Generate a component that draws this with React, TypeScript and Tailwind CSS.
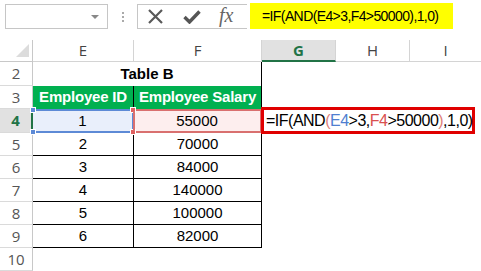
import React from 'react';

const cellFont = { fontFamily: '"Liberation Sans", Arial, sans-serif' };
const uiFont = { fontFamily: '"Open Sans", "Noto Sans", sans-serif' };

const salaries = [
  { id: 2, salary: '70000' },
  { id: 3, salary: '84000' },
  { id: 4, salary: '140000' },
  { id: 5, salary: '100000' },
  { id: 6, salary: '82000' },
];

// Formula rendered with Excel's reference colouring
const Formula: React.FC = () => (
  <>
    =IF(AND<span className="text-[#e0807a]">(</span>
    <span className="text-[#4f7fd0]">E4</span>&gt;3,
    <span className="text-[#d95050]">F4</span>&gt;50000
    <span className="text-[#e0807a]">)</span>,1,0)
  </>
);

const RowHead: React.FC<{ n: number; h: string; active?: boolean }> = ({ n, h, active }) => (
  <div
    style={uiFont}
    className={`${h} w-[33px] shrink-0 flex items-center justify-center text-[15px] border-b border-[#dadada] ${
      active
        ? 'bg-[#e1e1e1] text-[#217346] font-bold border-r-2 border-r-[#217346]'
        : 'text-[#555] border-r border-r-[#c8c8c8]'
    }`}
  >
    {n}
  </div>
);

const Handle: React.FC<{ className: string }> = ({ className }) => (
  <div className={`absolute w-[6px] h-[6px] border border-white ${className}`} />
);

const TopBar: React.FC = () => (
  <div className="h-[40px] relative flex items-start pt-[4px]">
    {/* name box */}
    <div className="ml-[5px] w-[103px] h-[25px] border border-[#c6c6c6] relative">
      <div className="absolute right-[8px] top-[10px] w-0 h-0 border-l-[4px] border-r-[4px] border-t-[4px] border-l-transparent border-r-transparent border-t-[#888]" />
    </div>
    {/* grip dots */}
    <div className="w-[29px] h-[25px] flex flex-col items-center justify-center gap-[2px]">
      <div className="w-[2px] h-[2px] bg-[#aaa]" />
      <div className="w-[2px] h-[2px] bg-[#aaa]" />
      <div className="w-[2px] h-[2px] bg-[#aaa]" />
    </div>
    {/* cancel / enter / insert function */}
    <div className="w-[110px] h-[25px] border border-r-0 border-[#c6c6c6] flex items-center pl-[9px]">
      <svg width="17" height="15" viewBox="0 0 17 15">
        <path d="M2 1 L15 14 M15 1 L2 14" stroke="#595959" strokeWidth="2.2" />
      </svg>
      <svg className="ml-[19px]" width="18" height="14" viewBox="0 0 18 14">
        <path d="M1.5 7 L6.5 12 L16.5 1.5" stroke="#555" strokeWidth="3.4" fill="none" />
      </svg>
      <span
        className="ml-[18px] text-[#666] italic text-[20px] leading-none -mt-[3px]"
        style={{ fontFamily: '"Liberation Serif", "Times New Roman", serif' }}
      >
        fx
      </span>
    </div>
    {/* formula input */}
    <div className="ml-[3px] -mt-[1px] w-[203px] h-[26px] bg-[#ffff00] flex items-center pl-[12px]">
      <span style={cellFont} className="text-[14px] tracking-[-0.6px] text-black whitespace-nowrap">
        =IF(AND(E4&gt;3,F4&gt;50000),1,0)
      </span>
    </div>
  </div>
);

const ColHeader: React.FC = () => (
  <div style={uiFont} className="flex h-[22px] text-[15px] text-[#444]">
    <div className="w-[33px] shrink-0 border-r border-b border-[#c8c8c8] relative">
      <svg className="absolute right-[3px] bottom-[4px]" width="13" height="13" viewBox="0 0 13 13">
        <path d="M13 0 L13 13 L0 13 Z" fill="#dcdcdc" />
      </svg>
    </div>
    <div className="w-[101px] shrink-0 border-r border-b border-[#d4d4d4] flex items-center justify-center">E</div>
    <div className="w-[128px] shrink-0 border-r border-b border-[#d4d4d4] flex items-center justify-center">F</div>
    <div className="w-[74px] shrink-0 bg-[#e1e1e1] border-b-2 border-[#217346] border-r border-r-[#d4d4d4] flex items-center justify-center font-bold text-[#217346]">
      G
    </div>
    <div className="w-[74px] shrink-0 border-r border-b border-[#d4d4d4] flex items-center justify-center">H</div>
    <div className="flex-1 border-b border-[#d4d4d4] flex items-center justify-center">I</div>
  </div>
);

export default function App() {
  return (
    <div className="w-[481px] h-[271px] bg-white overflow-hidden">
      <TopBar />
      <ColHeader />

      <div style={cellFont} className="text-[15px] text-black">
        {/* row 2 */}
        <div className="flex">
          <RowHead n={2} h="h-[24px]" />
          <div className="w-[229px] shrink-0 h-[24px] border-r border-black flex items-center justify-center font-bold">
            Table B
          </div>
        </div>

        {/* row 3 */}
        <div className="flex">
          <RowHead n={3} h="h-[23px]" />
          <div className="w-[101px] shrink-0 h-[23px] bg-[#00b050] border-r border-black text-white font-bold flex items-center justify-center tracking-[-0.2px]">
            Employee ID
          </div>
          <div className="w-[128px] shrink-0 h-[23px] bg-[#00b050] border-r border-black text-white font-bold flex items-center justify-center tracking-[-0.2px]">
            Employee Salary
          </div>
        </div>

        {/* row 4 */}
        <div className="flex">
          <RowHead n={4} h="h-[24px]" active />
          <div className="w-[101px] shrink-0 h-[24px] bg-[#e9effb] border-2 border-l-0 border-[#5d8ad6] relative flex items-center justify-center">
            1
            <Handle className="bg-[#5d8ad6] -left-[3px] -top-[4px]" />
            <Handle className="bg-[#5d8ad6] -left-[3px] -bottom-[4px]" />
          </div>
          <div className="w-[128px] shrink-0 h-[24px] bg-[#fdeeee] border-2 border-l-0 border-[#d9706f] relative flex items-center justify-center">
            55000
            <Handle className="bg-[#e06060] -left-[4px] -top-[4px]" />
            <Handle className="bg-[#e06060] -left-[4px] -bottom-[4px]" />
            <div className="absolute -left-[1px] top-0 bottom-0 w-[2px] bg-[#d9706f]" />
          </div>
          <div className="w-[74px] shrink-0 h-[24px] relative">
            <div className="absolute -left-[1px] -top-[2px] w-[214px] h-[27px] border-[3px] border-[#e00000] bg-white flex items-center pl-[2px] z-10">
              <span className="text-[16px] tracking-[-0.5px] whitespace-nowrap">
                <Formula />
              </span>
            </div>
          </div>
        </div>

        {/* rows 5 - 9 */}
        {salaries.map((r, i) => (
          <div key={r.id} className="flex">
            <RowHead n={i + 5} h="h-[23px]" />
            <div className="w-[101px] shrink-0 h-[23px] border-r border-b border-black flex items-center justify-center">
              {r.id}
            </div>
            <div className="w-[128px] shrink-0 h-[23px] border-r border-b border-black flex items-center justify-center">
              {r.salary}
            </div>
          </div>
        ))}

        {/* row 10 */}
        <div className="flex">
          <RowHead n={10} h="h-[23px]" />
        </div>
      </div>
    </div>
  );
}
